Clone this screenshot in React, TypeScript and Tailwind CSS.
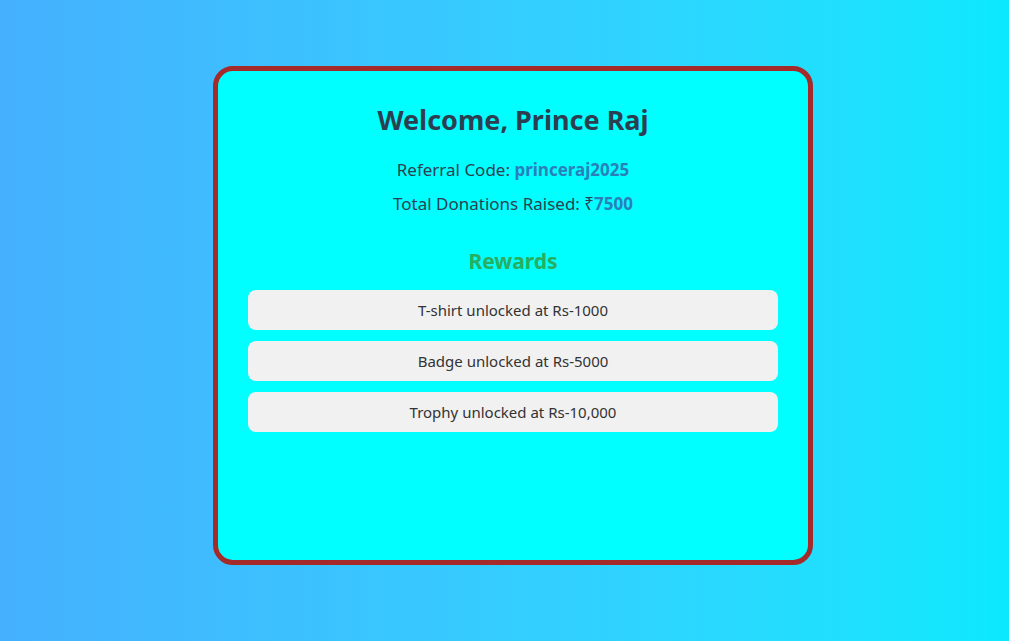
const rewards = [
  'T-shirt unlocked at Rs-1000',
  'Badge unlocked at Rs-5000',
  'Trophy unlocked at Rs-10,000',
];

export default function App() {
  return (
    <div className="min-h-screen w-full bg-gradient-to-r from-[#45b0fe] to-[#0ae9fe] font-['Noto_Sans',sans-serif] pt-[66px]">
      <div className="ml-[213px] w-[600px] h-[499px] rounded-[20px] border-[5px] border-[#a52a2a] bg-[#00ffff] p-[30px] text-center">
        <h2 className="mt-[1px] text-[27px] leading-[36px] font-bold text-[#2c3e50]">Welcome, Prince Raj</h2>
        <p className="mt-[20px] text-[17px] leading-[24px] text-[#2c3e50]">
          Referral Code: <span className="font-bold text-[#2980b9]">princeraj2025</span>
        </p>
        <p className="mt-[10px] text-[17px] leading-[24px] text-[#2c3e50]">
          Total Donations Raised: ₹<span className="font-bold text-[#2980b9]">7500</span>
        </p>
        <h3 className="mt-[31px] text-[21px] leading-[28px] font-bold text-[#27ae60]">Rewards</h3>
        <div className="mt-[15px] flex flex-col gap-[11px]">
          {rewards.map((r) => (
            <div key={r} className="h-[40px] flex items-center justify-center rounded-[8px] bg-[#f1f1f1] text-[15px] text-[#333]">
              {r}
            </div>
          ))}
        </div>
      </div>
    </div>
  );
}
